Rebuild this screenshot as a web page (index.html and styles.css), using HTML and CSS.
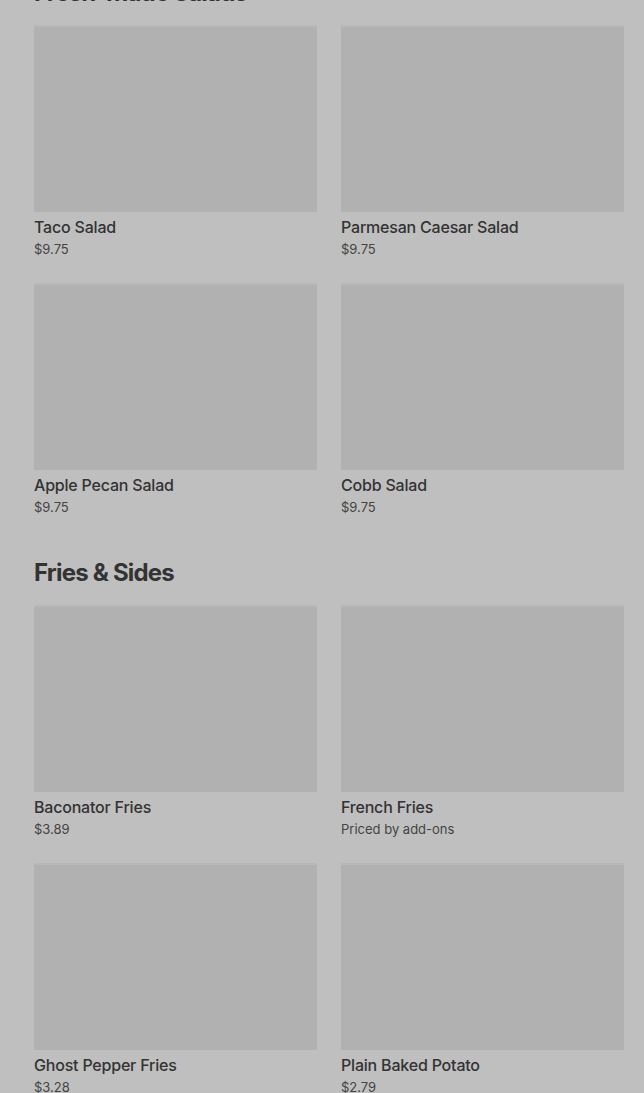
FILE: index.html
```html
<!DOCTYPE html>
<html>
<head>
<meta charset="utf-8">
<link rel="stylesheet" href="styles.css">
</head>
<body>
<main class="menu">
  <section class="section">
    <h2 class="section-title">Fresh-Made Salads</h2>
    <div class="grid">
      <div class="card"><div class="thumb"></div><div class="name">Taco Salad</div><div class="price">$9.75</div></div>
      <div class="card"><div class="thumb"></div><div class="name">Parmesan Caesar Salad</div><div class="price">$9.75</div></div>
      <div class="card"><div class="thumb"></div><div class="name">Apple Pecan Salad</div><div class="price">$9.75</div></div>
      <div class="card"><div class="thumb"></div><div class="name">Cobb Salad</div><div class="price">$9.75</div></div>
    </div>
  </section>
  <section class="section">
    <h2 class="section-title">Fries &amp; Sides</h2>
    <div class="grid">
      <div class="card"><div class="thumb"></div><div class="name">Baconator Fries</div><div class="price">$3.89</div></div>
      <div class="card"><div class="thumb"></div><div class="name">French Fries</div><div class="price">Priced by add-ons</div></div>
      <div class="card"><div class="thumb"></div><div class="name">Ghost Pepper Fries</div><div class="price">$3.28</div></div>
      <div class="card"><div class="thumb"></div><div class="name">Plain Baked Potato</div><div class="price">$2.79</div></div>
    </div>
  </section>
</main>
</body>
</html>
```

FILE: styles.css
```css
html, body {
  margin: 0;
  padding: 0;
  background: #bfbfbf;
  overflow: hidden;
}
body {
  font-family: Inter, "Liberation Sans", sans-serif;
  color: #333;
}
.menu {
  margin-top: -23px;
  padding: 0 20px 0 34px;
  display: flex;
  flex-direction: column;
  gap: 40px;
}
.section-title {
  margin: 0 0 16px;
  font-size: 24px;
  line-height: 32px;
  font-weight: 700;
  letter-spacing: -0.8px;
  color: #333;
}
.grid {
  display: grid;
  grid-template-columns: 283px 283px;
  column-gap: 24px;
  row-gap: 24px;
}
.thumb {
  height: 187px;
  background: #b1b1b1;
  border-top: 2px solid #b8b8b8;
  box-sizing: border-box;
}
.name {
  margin-top: 3px;
  font-size: 16px;
  line-height: 24px;
  font-weight: 500;
  letter-spacing: -0.2px;
  color: #333;
}
.price {
  font-size: 13px;
  line-height: 20px;
  color: #444;
}
```
